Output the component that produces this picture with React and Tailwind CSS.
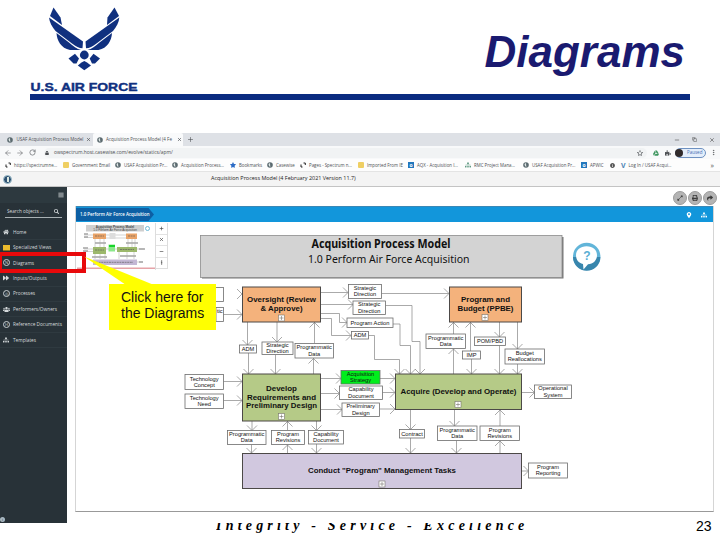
import React from 'react';
import {
  FaHome,
  FaSearch,
  FaForward,
  FaSitemap,
  FaMapMarkerAlt,
  FaLock,
  FaPuzzlePiece,
  FaStar,
  FaRegStar,
  FaShare,
  FaPrint,
  FaExpandAlt,
  FaBars,
  FaUsers,
  FaGoogleDrive,
  FaInfoCircle
} from 'react-icons/fa';
import { ArrowLeft, ArrowRight, RotateCw, X, Plus, Minus, Copy, MoreVertical } from 'lucide-react';

const AirForceLogo = () => (
  <svg className="block" width="72" height="64" viewBox="48 7 72 64" fill="#10307f">
    <path d="M53.500 7.500 L60.500 17.500 L62 25 L50 16 Z" />
    <path d="M49 17.500 L83 41.500 L82.500 48.300 C79 48.300 76 46.500 72 43.500 L55.500 31 C52 27 49.500 22 49 17.500 Z" />
    <path d="M56.500 33 L69 42.500 C73 46 77 49 81 50 L70 50 C61 48 57 41 56.500 33 Z" />
    <path d="M114.500 7.500 L107.500 17.500 L107 25 L119 16 Z" />
    <path d="M119.300 17.500 L85.500 41.500 L86 48.300 C89.500 48.300 92.500 46.500 96.500 43.500 L113 31 C116.500 27 119 22 119.300 17.500 Z" />
    <path d="M112 33 L99.500 42.500 C95.500 46 91.500 49 87.500 50 L98.500 50 C107.500 48 111.500 41 112 33 Z" />
    <circle cx="84.300" cy="55" r="4.400" />
    <path d="M68.500 58.500 L75 53.800 L79 58.500 L76.500 63.500 L73.500 63.500 Z" />
    <path d="M100 58.500 L93.500 53.800 L89.700 58.500 L92 63.500 L95 63.500 Z" />
    <path d="M77.800 65.500 L81.500 62.500 L84.300 61 L87 62.500 L91 65.500 L84.300 70.300 Z" />
  </svg>
);

const SlideHeader = () => (
  <header className="h-[133px] pl-[30px] pr-[30px]">
    <div className="h-[94px] flex justify-between">
      <div className="pt-[7px]">
        <div className="pl-[18px]"><AirForceLogo /></div>
        <svg className="block mt-[10px]" width="108" height="12" viewBox="30 81 108 12">
          <text x="30.500" y="91" textLength="107" lengthAdjust="spacingAndGlyphs" className="font-bold text-[11px] fill-[#10307f] stroke-[#10307f] font-['Liberation_Sans',sans-serif]" strokeWidth="0.4">U.S. AIR FORCE</text>
        </svg>
      </div>
      <h1 className="pt-[27px] pr-[5px] text-[44px] leading-[50px] font-bold italic text-[#1a1a70]">Diagrams</h1>
    </div>
    <div className="h-[6px] bg-[#0b2b80]" />
  </header>
);

const Globe = () => (
  <svg className="shrink-0" width="6" height="6" viewBox="0 0 6 6">
    <circle cx="3" cy="3" r="2.800" fill="#5c6b70" />
    <path d="M1.500 2 L3 1 L3.300 5 L2 4 Z" fill="#dfe7e6" />
  </svg>
);

const Corners = () => (
  <svg className="shrink-0" width="6" height="6" viewBox="0 0 6 6" fill="none" stroke="#222" strokeWidth="1">
    <path d="M1 2.500 V5 H2.500 M3.500 1 H5.300 V3" />
  </svg>
);

const Folder = () => <span className="shrink-0 w-[6px] h-[6px] bg-[#efcf63] rounded-[1px]" />;
const Outlook = () => <span className="shrink-0 w-[6px] h-[6px] bg-[#2277bd] text-white text-[5px] leading-[6px] font-bold text-center">o</span>;

const bookmarks = [
  { icon: <Corners />, label: 'https://spectrumne...', w: 'w-[58px]' },
  { icon: <Folder />, label: 'Government Email', w: 'w-[52px]' },
  { icon: <Globe />, label: 'USAF Acquisition Pr...', w: 'w-[57px]' },
  { icon: <Globe />, label: 'Acquisition Process...', w: 'w-[58px]' },
  { icon: <FaStar className="shrink-0 text-[#2b6bc5]" size={6} />, label: 'Bookmarks', w: 'w-[37px]' },
  { icon: <Globe />, label: 'Casewise', w: 'w-[33px]' },
  { icon: <Corners />, label: 'Pages - Spectrum n...', w: 'w-[58px]' },
  { icon: <Folder />, label: 'Imported From IE', w: 'w-[50px]' },
  { icon: <Outlook />, label: 'AQX - Acquisition I...', w: 'w-[57px]' },
  { icon: <FaSitemap className="shrink-0 text-[#5f9a82]" size={6} />, label: 'RMC Project Mana...', w: 'w-[58px]' },
  { icon: <Globe />, label: 'USAF Acquisition Pr...', w: 'w-[58px]' },
  { icon: <Outlook />, label: 'APWIC', w: 'w-[29px]' },
  { icon: <FaInfoCircle className="shrink-0 text-[#555]" size={5} />, label: '', w: 'w-[11px]' },
  { icon: <span className="shrink-0 text-[7px] font-bold text-[#4e86b5]">V</span>, label: 'Log In / USAF Acqui...', w: 'w-[60px]' }
];

const Browser = () => (
  <div className="text-[#4c4f53] font-['Open_Sans',sans-serif] text-[4.4px] leading-none">
    <div className="h-[13px] bg-[#dee1e6] flex items-center">
      <div className="w-[93px] pl-[7px] flex items-center gap-[3.5px]">
        <Globe />
        <span className="w-[66px] text-[4.5px] whitespace-nowrap">USAF Acquisition Process Model</span>
        <X size={5} strokeWidth={3} />
      </div>
      <div className="w-[90px] h-full bg-[#f9fafb] rounded-t-[2px] pl-[4px] flex items-center gap-[3px]">
        <Globe />
        <span className="w-[68px] text-[4.5px] whitespace-nowrap">Acquisition Process Model (4 Fe</span>
        <X size={5} strokeWidth={3} />
      </div>
      <Plus size={7} className="ml-[4px]" strokeWidth={2} />
      <div className="ml-auto mr-[5px] flex items-center gap-[12px] text-[#333]">
        <Minus size={6} />
        <Copy size={5} />
        <X size={6} />
      </div>
    </div>
    <div className="h-[13px] bg-[#f8f9fa] flex items-center pl-[4px]">
      <ArrowLeft size={8} strokeWidth={1.500} />
      <ArrowRight size={8} strokeWidth={1.500} className="ml-[4px]" />
      <RotateCw size={7} className="ml-[5px]" />
      <div className="flex-1 ml-[8px] h-[10px] rounded-full bg-[#f1f3f4] flex items-center pl-[1px] pr-[4px]">
        <FaLock size={4} />
        <span className="ml-[5px] text-[4.9px]">owspectrum.host.casewise.com/evolve/statics/apm/</span>
        <FaRegStar size={6} className="ml-auto" />
      </div>
      <FaGoogleDrive size={6} className="ml-[6px] text-[#3f9760]" />
      <FaPuzzlePiece size={6} className="ml-[6px]" />
      <div className="ml-[4px] w-[31px] h-[10px] rounded-full border border-[#6e91c1] bg-[#e4eefb] flex items-center">
        <span className="-ml-px w-[8px] h-[8px] rounded-full bg-[#302a2b]" />
        <span className="ml-[4px] text-[4.5px] text-[#3f6db1]">Paused</span>
      </div>
      <MoreVertical size={7} className="ml-[4px] mr-[3px]" />
    </div>
    <div className="h-[12px] bg-[#fdfdfd] flex items-center pl-[5px]">
      {bookmarks.map((b, i) => (
        <div key={i} className={`${b.w} flex items-center gap-[3px] whitespace-nowrap`}>
          {b.icon}
          <span>{b.label}</span>
        </div>
      ))}
      <span className="ml-auto mr-[6px] text-[7px]">»</span>
    </div>
    <div className="h-[16px] bg-[#f4f4f4] border-y border-t-[#e4e4e4] border-b-[#c4c4c4] flex items-center">
      <span className="ml-[3px] w-[9px] h-[9px] rounded-full bg-[#2f5172] border border-[#a6c4cf] flex items-center justify-center">
        <span className="w-[2px] h-[5px] bg-[#dce9e2]" />
      </span>
      <span className="ml-[199px] text-[5.45px] text-[#222] whitespace-nowrap">Acquisition Process Model (4 February 2021 Version 11.7)</span>
    </div>
  </div>
);

const Ring = ({ children }) => (
  <span className="w-[7px] h-[7px] rounded-full border-[0.5px] border-[#c9d0d3] flex items-center justify-center text-[4px]">{children}</span>
);

const menu = [
  { icon: <FaHome size={6} />, label: 'Home' },
  { icon: <span className="w-[7px] h-[6px] bg-[#e9b92c] border-b border-[#8d731f]" />, label: 'Specialized Views' },
  { icon: <Ring>N</Ring>, label: 'Diagrams' },
  { icon: <FaForward size={6} />, label: 'Inputs/Outputs' },
  { icon: <Ring>◎</Ring>, label: 'Processes' },
  { icon: <FaUsers size={7} />, label: 'Performers/Owners' },
  { icon: <Ring>H</Ring>, label: 'Reference Documents' },
  { icon: <FaSitemap size={6} />, label: 'Templates' }
];

const Sidebar = () => (
  <aside className="w-[67px] h-full bg-[#283238] text-[#d5dadc] flex flex-col font-['Open_Sans',sans-serif] text-[4.75px] leading-none">
    <div className="h-[16px] bg-[#2d393f] flex items-center justify-end pr-[3px]">
      <FaBars size={6} />
    </div>
    <div className="mx-[5px] mt-[2px] h-[13px] border-b border-[#a9b1b4] flex items-center justify-between pl-[2px] pr-[3px] text-[4.7px]">
      <span>Search objects ...</span>
      <FaSearch size={5} />
    </div>
    <nav className="mt-[7px]">
      {menu.map(item => (
        <div key={item.label} className="h-[15.4px] border-b border-[#2f3a40] flex items-center whitespace-nowrap">
          <span className="w-[13px] pl-[3px] flex items-center">{item.icon}</span>
          {item.label}
        </div>
      ))}
    </nav>
    <span className="mt-auto mb-px w-[5px] h-[5px] rounded-full bg-[#a9b9c3] text-[#283238] text-[4px] leading-[5px] text-center">i</span>
  </aside>
);

const ORANGE = '#f4b27c';
const GREEN = '#b5ca87';

// [x, y, width, height, fill, lines]; each line is [text, drawn width, baseline]
const processes = [
  [242.5, 287, 78, 35, ORANGE, [['Oversight (Review', 69, 302.300], ['& Approve)', 42, 311]]],
  [449.5, 287, 72, 35, ORANGE, [['Program and', 49, 302.300], ['Budget (PPBE)', 56, 311]]],
  [242.5, 374, 78, 47, GREEN, [['Develop', 31, 390.800], ['Requirements and', 69, 399.500], ['Preliminary Design', 71, 408.200]]],
  [395.5, 374, 126, 35.5, GREEN, [['Acquire (Develop and Operate)', 116, 394]]],
  [242.5, 453.5, 279, 35, '#d1c8df', [['Conduct "Program" Management Tasks', 148, 473]]]
];

const expanders = [[281.5, 318], [485, 317.5], [281.5, 416.5], [458, 404.5], [382, 484]];

const flows = [
  [200, 287.5, 23.5, 14, ['']],
  [216, 307.5, 7.5, 14, ['tic', '']],
  [348.5, 284.5, 33, 14, ['Strategic', 'Direction']],
  [353, 301, 32.5, 13.5, ['Strategic', 'Direction']],
  [347, 318, 46, 9.5, ['Program Action']],
  [351.5, 331.5, 17, 7.5, ['ADM']],
  [239.5, 345, 17, 8, ['ADM']],
  [262, 342, 31, 12.5, ['Strategic', 'Direction']],
  [295, 343.5, 38.5, 14.5, ['Programmatic', 'Data']],
  [426, 334, 39.5, 14.5, ['Programmatic', 'Data']],
  [474.5, 337, 31, 8.5, ['POM/PBD']],
  [462.5, 351, 18, 8, ['IMP']],
  [505, 349, 39.5, 15, ['Budget', 'Reallocations']],
  [185, 374.5, 38.5, 15, ['Technology', 'Concept']],
  [185, 394, 38.5, 14.5, ['Technology', 'Need']],
  [341, 370.5, 39, 13.5, ['Acquisition', 'Strategy'], '#00ee1c'],
  [339.5, 386, 43, 13.5, ['Capability', 'Document']],
  [342, 403, 37.5, 13.5, ['Preliminary', 'Design']],
  [534.5, 385, 37, 13.5, ['Operational', 'System']],
  [227.5, 430.5, 38.5, 14, ['Programmatic', 'Data']],
  [271.5, 430.5, 33, 14, ['Program', 'Revisions']],
  [308.5, 430.5, 35, 13.5, ['Capability', 'Document']],
  [399.5, 429.5, 25, 8.5, ['Contract']],
  [437.5, 426, 39.5, 14.5, ['Programmatic', 'Data']],
  [480, 426, 39.5, 14.5, ['Program', 'Revisions']],
  [528.5, 463, 39, 15, ['Program', 'Reporting']]
];

const wires = [
  'M223 314.500 H242',
  'M321 292.500 H348', 'M381.500 293.500 H449', 'M321 304.500 H353', 'M385.500 305.500 H412 V341.500 H420 V374',
  'M321 313.500 H339.500 V322.500 H347', 'M393 324 H400 V345.500 H410.500 V374', 'M321 318.500 H331.500 V335.500 H351', 'M368.500 335.500 H374.500 V359.500 H399.500 V374',
  'M247.500 322 V345', 'M248.500 353 V374', 'M277 322 V342', 'M275.500 354.500 V374', 'M314.500 343 V322', 'M313.500 374 V358',
  'M453.500 334 V322', 'M453.500 374 V348.500', 'M470.500 351 V322', 'M471.500 359 V374', 'M499.500 322 V337', 'M499.500 345.500 V374', 'M517.500 322 V349', 'M517.500 364 V374',
  'M223.500 381.500 H242', 'M223.500 400.500 H242',
  'M321 378.500 H341', 'M321 393.500 H339.500', 'M321 409.500 H342', 'M380 378.500 H395', 'M382.500 392.500 H395', 'M379.500 409 H395',
  'M521.500 392.500 H534.500', 'M521.500 471 H528.500',
  'M252 421 V430.500', 'M251.500 444.500 V453', 'M287.500 430 V421', 'M287.500 453 V444.500', 'M316.500 421 V430.500', 'M316.500 444 V453',
  'M410.500 409.500 V429.500', 'M410.500 438 V453', 'M454.500 409.500 V426', 'M456.500 440.500 V453', 'M500 426 V409.500', 'M500 453 V440.500'
];

// open arrow heads: tip x, tip y and the way they point
const heads = [
  [242, 294, 'r'], [242, 314.5, 'r'], [348, 292.5, 'r'], [449, 293.5, 'r'], [353, 304.5, 'r'], [347, 322.5, 'r'], [351, 335.5, 'r'],
  [247.5, 345, 'd'], [248.5, 374, 'd'], [277, 342, 'd'], [275.5, 374, 'd'], [314.5, 322.5, 'u'], [313.5, 358.5, 'u'],
  [453.5, 322.5, 'u'], [453.5, 349, 'u'], [470.5, 322.5, 'u'], [471.5, 374, 'd'], [499.5, 337, 'd'], [499.5, 374, 'd'], [517.5, 349, 'd'], [517.5, 374, 'd'],
  [399.5, 374, 'd'], [410.5, 374, 'd'], [420, 374, 'd'],
  [242, 381.5, 'r'], [242, 400.5, 'r'], [341, 378.5, 'r'], [339.5, 393.5, 'r'], [342, 409.5, 'r'], [395, 378.5, 'r'], [395, 392.5, 'r'], [395, 409, 'r'],
  [534.5, 392.5, 'r'], [528.5, 471, 'r'],
  [252, 430.5, 'd'], [251.5, 453, 'd'], [287.5, 421.5, 'u'], [287.5, 445, 'u'], [316.5, 430.5, 'd'], [316.5, 453, 'd'],
  [410.5, 429.5, 'd'], [410.5, 453, 'd'], [454.5, 426, 'd'], [456.5, 453, 'd'], [500, 410, 'u'], [500, 441, 'u']
];

const headPath = ([x, y, dir]) => {
  if (dir === 'r') return `M${x - 5} ${y - 5} L${x} ${y} L${x - 5} ${y + 5}`;
  const back = dir === 'd' ? y - 5 : y + 5;
  return `M${x - 5} ${back} L${x} ${y} L${x + 5} ${back}`;
};

const Diagram = () => (
  <svg className="block font-['Liberation_Sans',sans-serif]" width="637" height="289" viewBox="76 222 637 289">
    <rect x="202" y="237" width="361.500" height="41.500" fill="#777" />
    <rect x="200.500" y="235.500" width="361.500" height="42" fill="#d3d3d3" stroke="#8c8c8c" strokeWidth="0.800" />
    <g className="font-['Noto_Sans',sans-serif]" fill="#111">
      <text x="311.500" y="247.800" textLength="139" lengthAdjust="spacingAndGlyphs" className="text-[11.5px] font-bold">Acquisition Process Model</text>
      <text x="308" y="263" textLength="161.500" lengthAdjust="spacingAndGlyphs" className="text-[11.5px]">1.0 Perform Air Force Acquisition</text>
    </g>

    <circle cx="586.700" cy="256.500" r="13.700" fill="#62b5d9" />
    <path d="M573 257 A13.700 13.700 0 0 0 600.400 257 Z" fill="#3886ad" />
    <path d="M586.500 246.300 C593 246.300 597 250 597 255.200 C597 260.500 593 264 588 264.200 L583.500 269.500 L583 264 C578.500 263 576 259.500 576 255.200 C576 250 580.500 246.300 586.500 246.300 Z" fill="#fff" />
    <text x="586.800" y="259.500" textAnchor="middle" className="text-[12px] font-bold" fill="#5aaed3">?</text>

    <g fill="none" stroke="#858585" strokeWidth="0.700">
      {wires.map(d => <path key={d} d={d} />)}
      {heads.map((h, i) => <path key={i} d={headPath(h)} />)}
    </g>

    {processes.map(([x, y, w, h, fill, lines]) => (
      <g key={lines[0][0]}>
        <rect x={x} y={y} width={w} height={h} fill={fill} stroke="#4c4947" strokeWidth="1" />
        {lines.map(([label, len, base]) => (
          <text key={label} x={x + w / 2} y={base} textAnchor="middle" textLength={len} lengthAdjust="spacingAndGlyphs" className="text-[7.8px] font-bold" fill="#111">{label}</text>
        ))}
      </g>
    ))}
    {expanders.map(([x, y]) => (
      <g key={`${x}-${y}`} stroke="#77736c" strokeWidth="0.600">
        <rect x={x - 3} y={y - 3} width="6" height="6" fill="#fff" />
        <path d={`M${x - 2} ${y} h4 M${x} ${y - 2} v4`} />
      </g>
    ))}

    {flows.map(([x, y, w, h, lines, fill], i) => (
      <g key={i}>
        <rect x={x} y={y} width={w} height={h} fill={fill || '#fff'} stroke="#6c6c6c" strokeWidth="0.800" />
        {lines.map((line, n) => (
          <text key={n} x={x + w / 2} y={lines.length === 1 ? y + h / 2 + 1.9 : y + h / 2 - 1.3 + n * 6.2} textAnchor="middle" className="text-[5.7px]" fill="#111">{line}</text>
        ))}
      </g>
    ))}
  </svg>
);

const MiniMap = () => (
  <svg className="block" width="78" height="47" viewBox="77 223 78 47">
    <rect x="77" y="223" width="78" height="45.500" fill="#fff" />
    <rect x="77" y="267.500" width="78" height="1.500" fill="#e5a3a8" />
    <rect x="86" y="225" width="58" height="6.500" fill="#cfcfcf" />
    <text x="115" y="228" textAnchor="middle" className="text-[3px] font-bold" fill="#444">Acquisition Process Model</text>
    <text x="115" y="231" textAnchor="middle" className="text-[3px]" fill="#444">1.0 Perform Air Force Acquisition</text>
    <circle cx="147.500" cy="228.500" r="2" fill="#fff" stroke="#6fbad8" />
    <g fill="none" stroke="#a5a5a5" strokeWidth="0.500">
      <path d="M84 235 H93 M84 237.500 H93 M106 235 H126 M106 238 H126 M95 239 V247 M100 239 V247 M104 239 V247 M128 239 V247 M132 239 V247 M135 239 V247" />
      <path d="M84 249 H93 M84 251.500 H93 M106 249 H117 M137 249 H144 M95 254 V259 M100 254 V259 M105 254 V259 M119 252 V259 M127 252 V259 M134 252 V259 M137 262 H143" />
      <path d="M84 234 h4 M84 237 h4 M95 243 h11 M126 243 h12 M83 248 h5 M83 251 h5 M139 249 h6 M92 257 h15 M120 256 h16 M139 262 h4" strokeWidth="1.500" />
    </g>
    <rect x="109.500" y="233" width="6" height="6" fill="#ddd" />
    <rect x="93" y="233.500" width="13" height="5.500" fill="#e9a368" />
    <rect x="126" y="233.500" width="11" height="5.500" fill="#e9a368" />
    <rect x="93" y="247" width="13" height="7" fill="#9cb86c" />
    <rect x="117" y="247" width="20" height="5" fill="#9cb86c" />
    <rect x="108.500" y="244.500" width="6.500" height="7" fill="#8be88b" />
    <rect x="109" y="245" width="6" height="2" fill="#18d52b" />
    <rect x="93" y="259.500" width="44" height="5.500" fill="#c3b7d4" />
    <path d="M96 262.300 h37 M95 236 h9 M128 236 h7 M95 250 h9 M120 249.500 h14" stroke="#555" strokeWidth="0.600" strokeDasharray="2 0.600" />
  </svg>
);

const Workspace = () => (
  <main className="flex-1 bg-white pl-[8px] pr-[3px]">
    <div className="h-[19px] flex justify-end items-center gap-px pt-[2px] text-[#3a3a3a]">
      {[FaExpandAlt, FaPrint, FaShare].map((Icon, i) => (
        <span key={i} className="w-[14px] h-[14px] rounded-full bg-[#b4b4b4] border border-[#9c9c9c] flex items-center justify-center">
          <Icon size={6} />
        </span>
      ))}
    </div>
    <div className="w-[639px] h-[306px] border border-t-0 border-[#d5d5d5] border-b-[#999]">
      <div className="h-[16px] bg-[#1296db] border-t border-[#3a88b6] flex items-center text-white">
        <div className="w-[78px] h-[13px] pl-[4px] bg-[#0d5fa4] flex items-center text-[4.4px] font-semibold whitespace-nowrap font-['Open_Sans',sans-serif] [clip-path:polygon(0_0,93%_0,100%_50%,93%_100%,0_100%)]">1.0 Perform Air Force Acquisition</div>
        <FaMapMarkerAlt size={6} className="ml-auto" />
        <FaSitemap size={6} className="ml-[9px] mr-[6px]" />
      </div>
      <div className="relative">
        <Diagram />
        <div className="absolute left-px top-px flex">
          <div className="border-r border-[#ddd]"><MiniMap /></div>
          <div className="w-[12px] h-[46px] bg-white border-r border-b border-[#ddd] flex flex-col divide-y divide-[#e2e2e2] text-[#444]">
            {[Plus, X, Minus, MoreVertical].map((Icon, i) => (
              <span key={i} className="flex-1 flex items-center justify-center"><Icon size={5} strokeWidth={3} /></span>
            ))}
          </div>
        </div>
      </div>
    </div>
  </main>
);

// highlight round the menu entry and the balloon that points at it
const Callout = () => (
  <>
    <div className="absolute left-[-2px] top-[252px] w-[88px] h-[21px] border-4 border-[#e8090b]" />
    <svg className="absolute left-[84px] top-[256px]" width="72" height="30" viewBox="84 256 72 30">
      <path d="M84 256.500 L154 285 H126 Z" fill="#ff0" />
    </svg>
    <div className="absolute left-[109px] top-[284px] w-[107px] h-[46px] bg-[#ff0] pt-[5px] pl-[12px] text-[14px] leading-4 text-[#111] whitespace-nowrap">
      Click here for<br />the Diagrams
    </div>
  </>
);

const App = () => (
  <div className="relative w-[720px] h-[540px] overflow-hidden bg-white font-['Liberation_Sans',Arial,sans-serif]">
    <SlideHeader />
    <Browser />
    <div className="h-[336px] flex">
      <Sidebar />
      <Workspace />
    </div>
    <footer className="h-[17px] flex justify-between pl-[216px] pr-[8.5px]">
      <div className="h-[17px] overflow-hidden">
        <p className="-mt-[5px] text-[14px] leading-4 font-bold italic tracking-[4.2px] text-black whitespace-nowrap font-['Liberation_Serif',serif]">Integrity - Service - Excellence</p>
      </div>
      <span className="-mt-[5px] text-[14px] leading-4 text-black">23</span>
    </footer>
    <Callout />
  </div>
);

export default App;
